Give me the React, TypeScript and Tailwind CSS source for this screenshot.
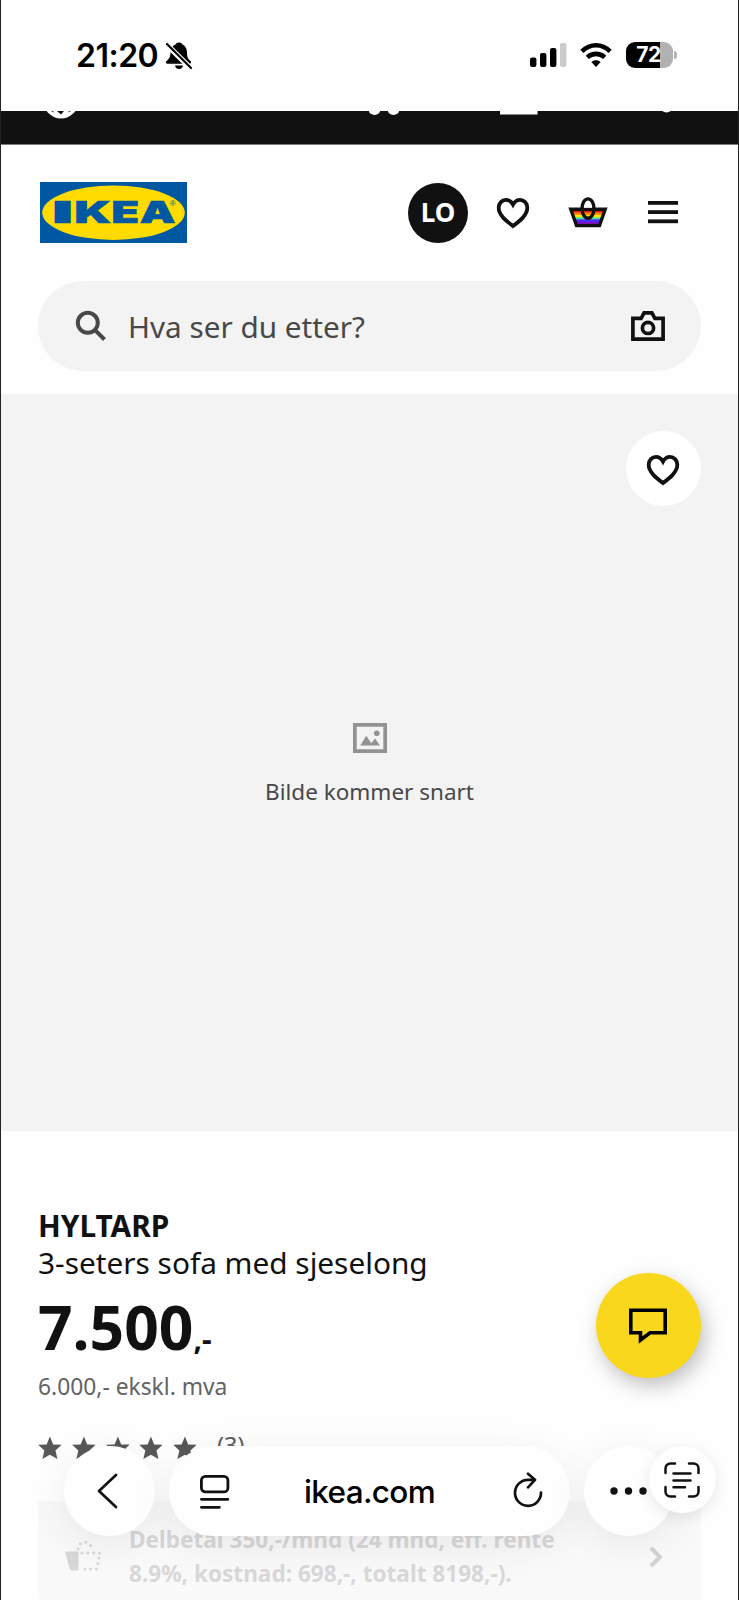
import type { ReactNode } from 'react';

const STARS = [1, 2, 3, 4, 5];

const StatusBar = () => (
  <div className="flex h-[111px] items-start justify-between bg-[#fefefe] pl-[76px] pr-[61px] pt-[37px] text-black">
    <div className="flex items-center">
      <span className="-ml-px mr-px w-[84px] whitespace-nowrap font-['Inter',sans-serif] text-[32px] font-semibold leading-[38px] tracking-[-0.5px]">21:20</span>
      <svg className="ml-1 h-[28px] w-[28px]" viewBox="0 0 28 28">
        <path d="M14 0.500c-1.800 0-3 .8-3.500 2.100C7 4 5.500 7 5.500 10.500c0 4.500-1.500 6.500-4 8.500-1.200 1-.6 2.800 1 2.800h22c1.600 0 2-1.800 1-2.800-2.500-2-3.500-4-3.500-8.500C22 7 20.500 4 17.500 2.600 17 1.300 15.800.5 14 .5zM10 23.500h8c-.7 2.600-2 3.500-4 3.500s-3.300-.9-4-3.500z" />
        <path d="M0.500 1.500L27 27.500" stroke="#fefefe" strokeWidth="5.500" />
        <path d="M2 2L26 26" stroke="#000" strokeWidth="2.200" strokeLinecap="round" />
      </svg>
    </div>
    <div className="flex items-center pt-[5px]">
      <svg className="h-[26px] w-[38px]" viewBox="0 0 38 26">
        <rect x="0" y="15.500" width="6.400" height="9.500" rx="2" />
        <rect x="10" y="11" width="6.400" height="14" rx="2" />
        <rect x="20" y="6" width="6.400" height="19" rx="2" />
        <rect x="30" y="1" width="6.400" height="24" rx="2" fill="#cbcbcb" />
      </svg>
      <svg className="ml-[12px] h-[26px] w-[32px]" viewBox="0 0 32 26" fill="none" stroke="#000" strokeWidth="4.600">
        <path d="M1.900 9.400C10 1.100 22 1.100 30.100 9.400" />
        <path d="M7.300 15.400c5-4.700 12.400-4.700 17.400 0" />
        <path d="M16 25l-4.600-5c2.600-2.400 6.600-2.400 9.200 0z" fill="#000" stroke="none" />
      </svg>
      <div className="ml-[14px] flex h-[26px] w-[47px] items-center justify-center rounded-[9px] bg-linear-to-r from-black from-73% to-[#b1b1b1] to-73% pr-[2px] font-['Inter',sans-serif] text-[21px] font-bold tracking-[-0.5px] text-white">
        72
      </div>
      <div className="ml-[1px] h-[8px] w-[3px] rounded-r-full bg-[#b1b1b1]" />
    </div>
  </div>
);

// Dark promo strip, scrolled halfway under the status bar
const PromoStrip = () => (
  <svg className="block h-[34px] w-full bg-[#111]" viewBox="1 0 737 34" preserveAspectRatio="none" fill="#fefefe">
    <circle cx="61" cy="-10" r="17.500" />
    <path d="M57 0h7l-3 3.500zM51 0h2l1 1.500zM68 1.500l1-1.500h2z" fill="#111" />
    <circle cx="374.500" cy="-2" r="6" />
    <circle cx="393.500" cy="-2" r="6" />
    <rect x="500" y="-4" width="37.500" height="7.500" />
    <circle cx="666.500" cy="-5" r="6.500" />
    <rect x="1" y="33.300" width="737" height="0.700" fill="#aaa" />
  </svg>
);

const Logo = () => (
  <svg className="h-[61px] w-[147px]" viewBox="0 0 147 61">
    <rect width="147" height="61" fill="#0058a3" />
    <ellipse cx="73.500" cy="30.700" rx="71.300" ry="27.200" fill="#ffdb00" />
    <g fill="#0058a3" stroke="#0058a3" strokeWidth="0.700" fontFamily="Inter, sans-serif" fontWeight="900" fontSize="30.300">
      <text transform="translate(12 41) scale(2.400 1)">I</text>
      <text transform="translate(34.500 41) scale(1.590 1)">K</text>
      <text transform="translate(71.500 41) scale(1.480 1)">E</text>
      <text transform="translate(99.800 41) scale(1.480 1)">A</text>
    </g>
    <text x="129.800" y="23.500" fill="#0058a3" fontFamily="'Liberation Sans', sans-serif" fontSize="8">®</text>
  </svg>
);

const HeartIcon = () => (
  <svg className="mr-[2px] h-[36px] w-[36px]" viewBox="0 0 36 36" fill="none" stroke="#111" strokeWidth="3.800">
    <path d="M18 31C12 26.500 3.700 20.500 3.700 12.800c0-4.600 3.300-7.900 7.300-7.900 3 0 5.400 1.700 7 4.600 1.600-2.900 4-4.600 7-4.600 4 0 7.300 3.300 7.300 7.900C32.300 20.500 24 26.500 18 31z" />
  </svg>
);

const BagIcon = () => (
  <svg className="mr-[2px] h-[36px] w-[40px]" viewBox="0 0 40 36">
    <path d="M3.500 14h33l-2 5h-29z" fill="#f01414" />
    <path d="M4.500 17.500h31l-1 3h-29z" fill="#ff8c00" />
    <path d="M5.500 20h29l-1 3h-27z" fill="#ffed00" />
    <path d="M6.500 22.300h27l-1 2.500h-25z" fill="#4be39a" />
    <path d="M7 24.300h26l-1 3h-24z" fill="#4a2bff" />
    <path d="M8 27h24l-1 3.500h-22z" fill="#7a10b8" />
    <path d="M2.800 14.300h34.400L31.500 30.600h-23z" fill="none" stroke="#111" strokeWidth="3.400" />
    <path d="M15.500 12.800h9v-1.500c0-3-2-6-4.500-6s-4.500 3-4.500 6z" fill="#fff" />
    <ellipse cx="20" cy="13.500" rx="6" ry="9.600" fill="none" stroke="#111" strokeWidth="3.400" />
  </svg>
);

const Header = () => (
  <header className="h-[249px] bg-[#fefefe] px-[37px] pt-[37px]">
    <div className="flex items-center justify-between pl-[2px]">
      <Logo />
      <div className="flex items-center">
        <div className="mr-2 flex h-[60px] w-[60px] items-center justify-center rounded-full bg-[#111] text-[26px] font-bold text-white">
          LO
        </div>
        <button className="flex w-[75px] justify-center"><HeartIcon /></button>
        <button className="flex w-[75px] justify-center"><BagIcon /></button>
        <button className="flex w-[75px] justify-center">
          <svg className="mb-px mr-[2px] h-[24px] w-[30px]" viewBox="0 0 30 24" fill="#111">
            <rect y="1" width="30" height="3.800" />
            <rect y="10.200" width="30" height="3.800" />
            <rect y="19.400" width="30" height="3.800" />
          </svg>
        </button>
      </div>
    </div>
    <div className="mt-[38px] flex h-[90px] items-center rounded-full bg-[#f3f3f3] pl-[37px] pr-[35px]">
      <svg className="h-[32px] w-[32px]" viewBox="0 0 32 32" fill="none" stroke="#484848" strokeWidth="4">
        <circle cx="12.800" cy="12.800" r="10" />
        <path d="M19.800 19.800l9.700 9.700" />
      </svg>
      <span className="ml-[21px] flex-1 pt-[3px] text-[29.700px] text-[#484848]">Hva ser du etter?</span>
      <svg className="h-[32px] w-[36px]" viewBox="0 0 36 32" fill="none" stroke="#111" strokeWidth="3.700">
        <path d="M2.900 8.400h8.200l3-5.500h7.800l3 5.500h8.200v20.700H2.900z" />
        <circle cx="18" cy="17.900" r="5.600" />
      </svg>
    </div>
  </header>
);

const ProductImage = () => (
  <section className="relative flex h-[737px] flex-col items-center pt-[329px] bg-[#f3f3f3]">
    <button className="absolute right-[37px] top-[37px] flex h-[75px] w-[75px] items-center justify-center rounded-full bg-white pt-[2px]">
      <HeartIcon />
    </button>
    <svg className="ml-px h-[30px] w-[34px]" viewBox="0 0 34 30" fill="#929292">
      <path d="M0 0h34v30H0zM3.700 3.700v22.600h26.600V3.700z" fillRule="evenodd" />
      <path d="M7.300 22.500l6-9.700 5 7.500 3.700-4.700 5 6.900z" />
      <circle cx="23.800" cy="10.300" r="2.800" />
    </svg>
    <p className="mt-[23px] text-[22.500px] leading-[32px] text-[#484848]">Bilde kommer snart</p>
  </section>
);

const ProductInfo = () => (
  <section className="px-[37px] pt-[76px] text-[#111]">
    <h1 className="text-[29.800px] leading-[38px]">
      <span className="block font-bold">HYLTARP</span>
      <span className="-mt-px block">3-seters sofa med sjeselong</span>
    </h1>
    <p className="mt-[15px] whitespace-nowrap text-[60.500px] font-bold leading-[60px]">
      7.500<span className="text-[30px]">,-</span>
    </p>
    <p className="mt-[2px] text-[22.800px] leading-[32px] text-[#636363]">6.000,- ekskl. mva</p>
    <div className="mt-[25px] flex h-[40px] items-center">
      {STARS.map(star => (
        <svg key={star} className="mr-[10px] h-[24px] w-[23.800px]" viewBox="0 0 24 24" fill="#4f4f4f">
          <path d="M12 0.500l3.300 7.900 8.500.2-6.200 5.800 2 8.800L12 18.900l-7.600 4.300 2-8.800L.2 8.600l8.500-.2z" />
        </svg>
      ))}
      <span className="mb-[4px] ml-[10px] text-[23.500px] text-[#555]">(3)</span>
    </div>
    <div className="mt-[33px] flex h-[130px] items-start bg-linear-to-b from-[#f7f7f7] to-[#f9f9f9] pl-[27px] pr-[37px] pt-[22px]">
      <svg className="mt-[18px] h-[31px] w-[38px]" viewBox="0 0 38 31">
        <path d="M0 10.500h13.500v19H7.500c-1.500 0-2.500-.6-3-2z" fill="#cfcfcf" />
        <path d="M17 12h18l-3 16H17M13 8c1-9 12-9 14 0" fill="none" stroke="#d2d2d2" strokeWidth="3" strokeDasharray="0.100 5.700" strokeLinecap="round" />
      </svg>
      <p className="ml-[26px] flex-1 whitespace-nowrap text-[22.600px] font-bold leading-[34px] text-[#d0d0d0]">
        Delbetal 350,-/mnd (24 mnd, eff. rente
        <br />
        8.9%, kostnad: 698,-, totalt 8198,-).
      </p>
      <svg className="mt-[23px] h-[22px] w-[16px]" viewBox="0 0 16 22" fill="none" stroke="#cacaca" strokeWidth="4">
        <path d="M3 2l9 9-9 9" />
      </svg>
    </div>
  </section>
);

const Pill = ({ className, children }: { className: string; children: ReactNode }) => (
  <div className={`flex h-[90px] items-center rounded-full bg-[#fefefe] shadow-[0_8px_40px_rgba(0,0,0,0.07)] ${className}`}>
    {children}
  </div>
);

const BrowserBar = () => (
  <div className="absolute inset-x-0 bottom-0 flex h-[200px] items-start bg-linear-to-b from-white/0 to-white/20 pl-[63px] pt-[46px] font-['Inter',sans-serif] text-black">
    <Pill className="w-[91px] justify-center">
      <svg className="mr-[6px] h-[36px] w-[22px]" viewBox="0 0 22 36" fill="none" stroke="#111" strokeWidth="2.700" strokeLinecap="round" strokeLinejoin="round">
        <path d="M20 2L3 18l17 16" />
      </svg>
    </Pill>
    <Pill className="ml-[14px] w-[401px] justify-between pl-[30px] pr-[27px]">
      <svg className="mt-[2px] h-[36px] w-[32px]" viewBox="0 0 32 36" fill="none" stroke="#111" strokeWidth="2.800" strokeLinecap="round">
        <rect x="2.400" y="2.400" width="26.500" height="15.500" rx="4" />
        <path d="M2.400 25.300h26.500M2.400 33.300h18" />
      </svg>
      <span className="mr-[5px] pt-[2px] text-[31.500px] font-medium tracking-[-0.650px]">ikea.com</span>
      <svg className="mb-[2px] h-[36px] w-[30px]" viewBox="0 0 30 36" fill="none" stroke="#111" strokeWidth="2.700" strokeLinecap="round" strokeLinejoin="round">
        <path d="M28 20.500A13 13 0 1 1 15 7.800h6M15 1.800l7 6-7 7.500" />
      </svg>
    </Pill>
    <Pill className="ml-[14px] w-[90px] pl-[26px]">
      <svg className="h-[10px] w-[38px]" viewBox="0 0 38 10" fill="#111">
        <circle cx="4" cy="5" r="3.700" />
        <circle cx="18.500" cy="5" r="3.700" />
        <circle cx="33" cy="5" r="3.700" />
      </svg>
    </Pill>
    <div className="-ml-[25px] flex h-[67px] w-[67px] items-center justify-center rounded-full bg-[#fefefe] shadow-[0_4px_16px_rgba(0,0,0,0.09)]">
      <svg className="mr-[1px] h-[36px] w-[36px]" viewBox="0 0 36 36" fill="none" stroke="#111" strokeWidth="2.500" strokeLinecap="round">
        <path d="M1.500 11V6.500a5 5 0 0 1 5-5H11M25 1.500h4.500a5 5 0 0 1 5 5V11M34.500 25v4.500a5 5 0 0 1-5 5H25M11 34.500H6.500a5 5 0 0 1-5-5V25" />
        <path d="M9.500 11.500h17M9.500 18.500h17M9.500 25.200h11.500" />
      </svg>
    </div>
  </div>
);

const App = () => {
  return (
    <div className="relative h-[1600px] w-full overflow-hidden border-x border-[#222] bg-[#fefefe] font-['Noto_Sans',sans-serif]">
      <StatusBar />
      <PromoStrip />
      <Header />
      <ProductImage />
      <ProductInfo />
      <button className="absolute right-[37px] top-[1273px] flex h-[105px] w-[105px] items-center justify-center rounded-full bg-[#f8d71c] shadow-[4px_8px_20px_rgba(0,0,0,0.25)]">
        <svg className="mr-[2px] h-[36px] w-[38px]" viewBox="0 0 38 36" fill="none" stroke="#000" strokeWidth="3.600">
          <path d="M1.800 2.200h34.400v22.500H21L11.500 32v-7.300H1.800z" />
        </svg>
      </button>
      <BrowserBar />
    </div>
  );
};

export default App;
